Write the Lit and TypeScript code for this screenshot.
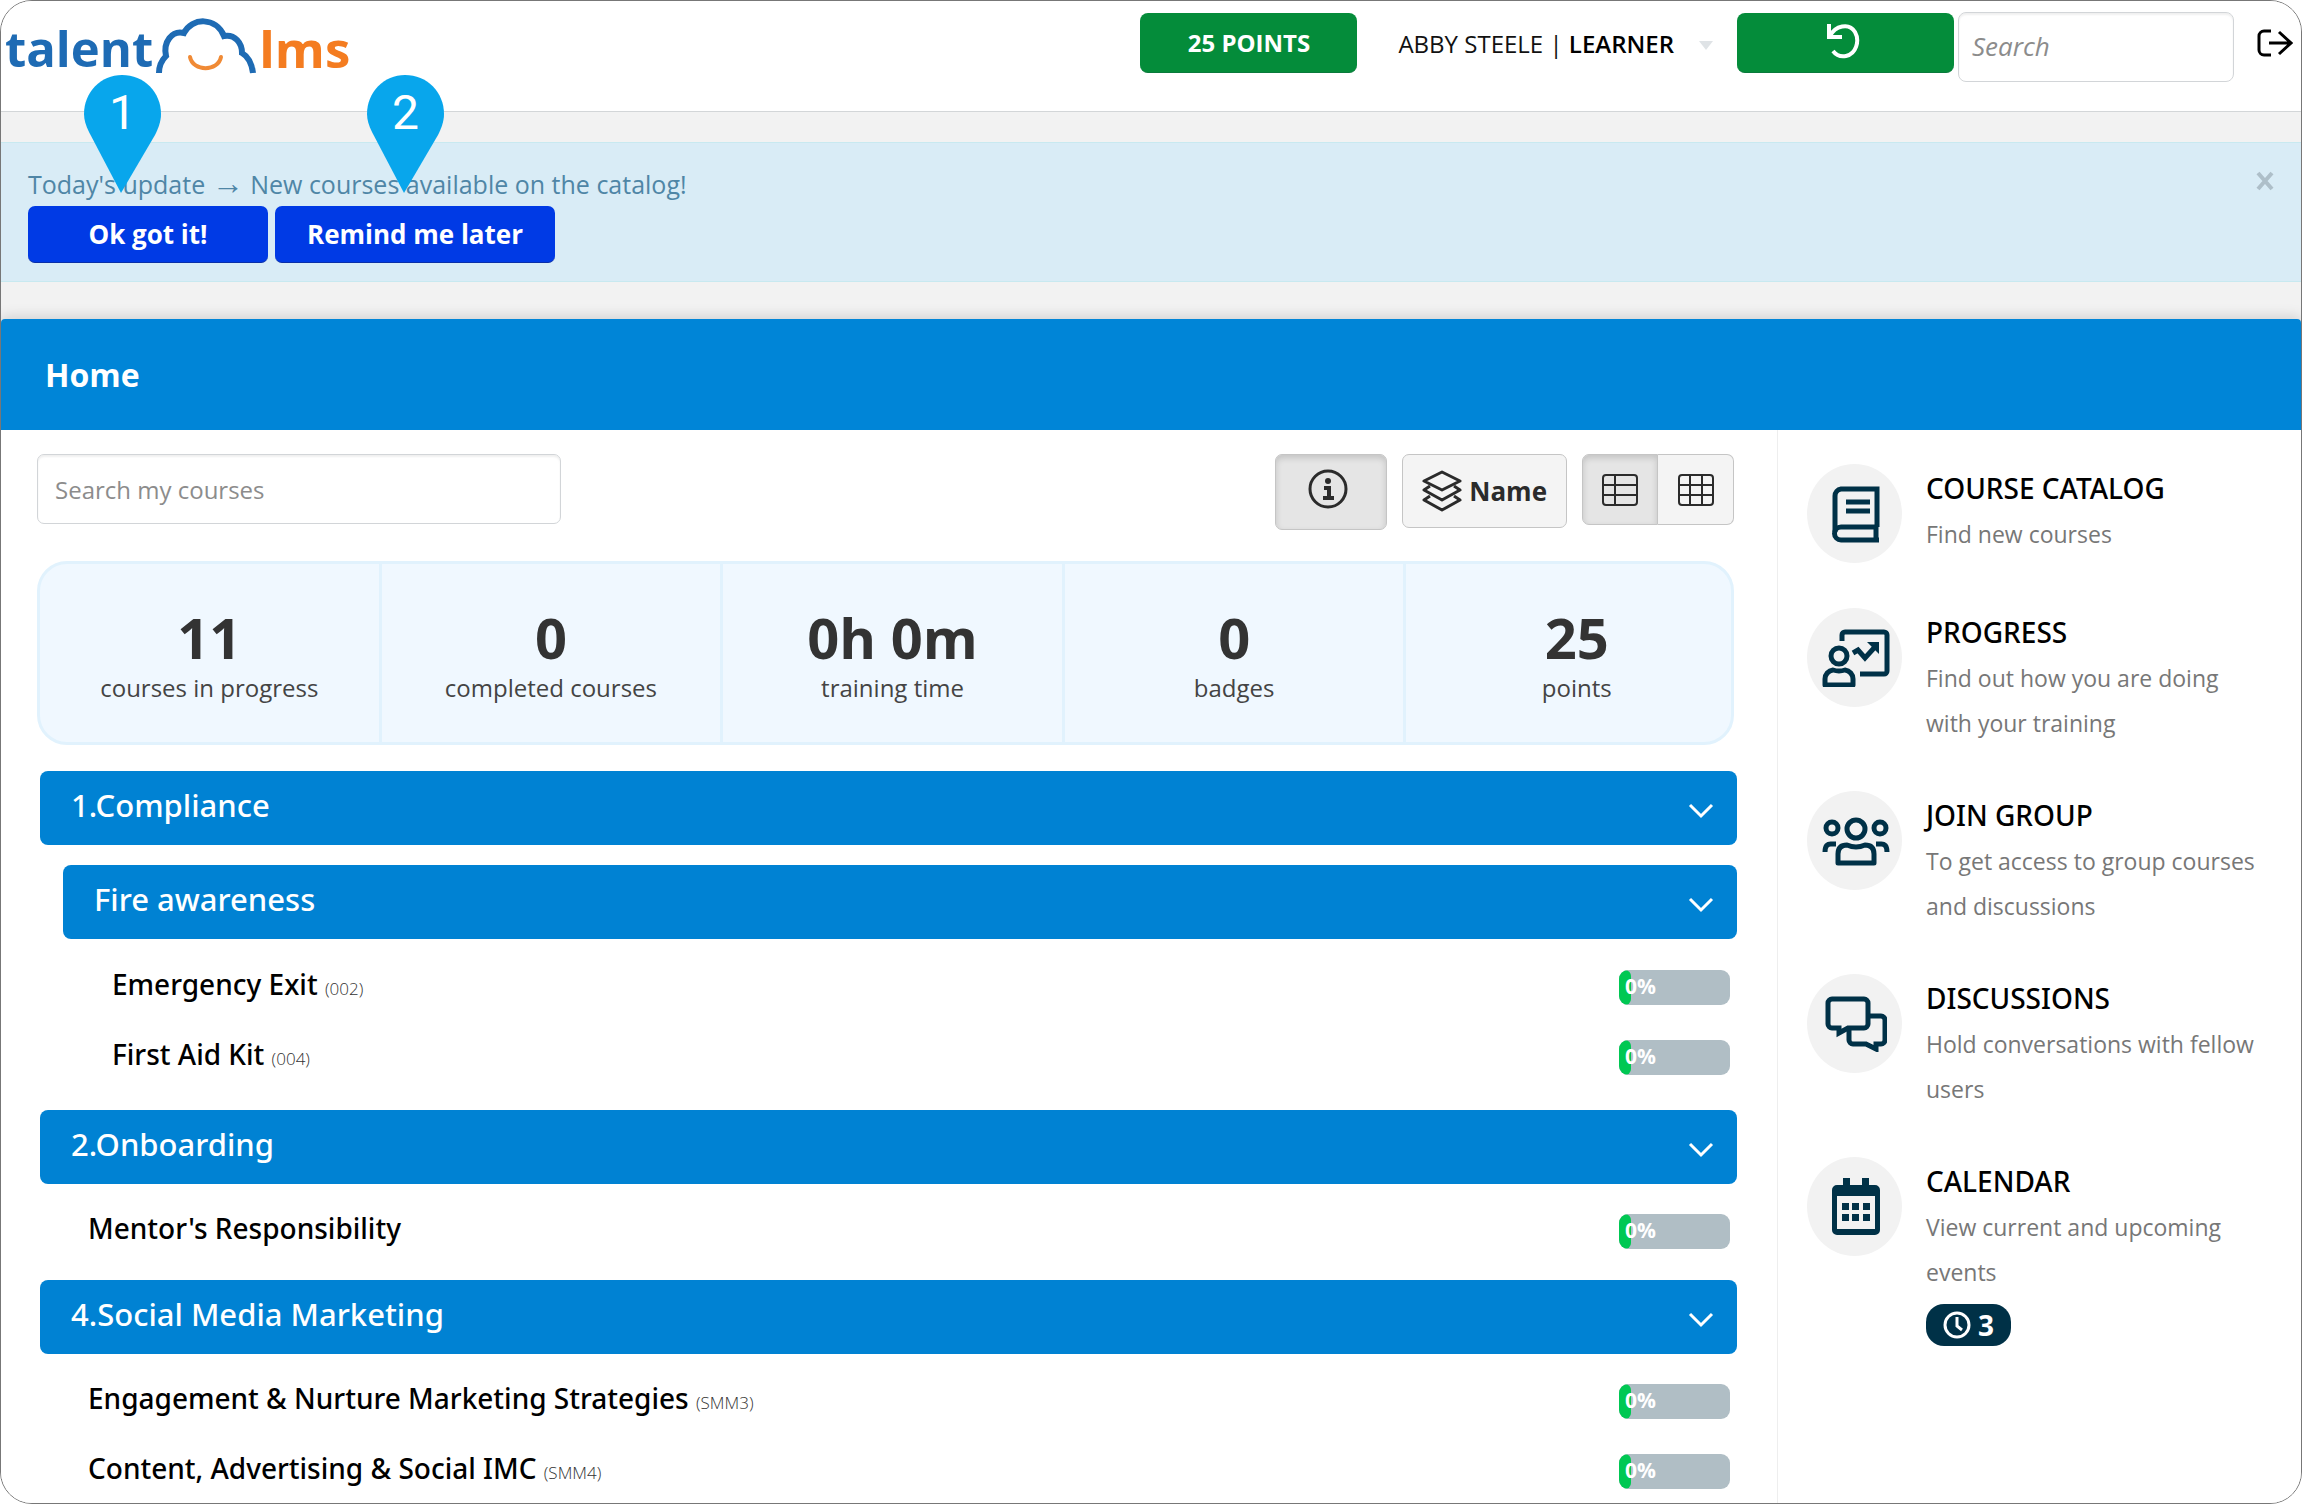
import { LitElement, html, css, nothing, type TemplateResult } from "lit";
import { customElement, property } from "lit/decorators.js";

interface Course {
  title: string;
  code?: string;
  progress: number;
}

interface Category {
  title: string;
  courses: Course[];
  children?: Category[];
}

interface Shortcut {
  title: string;
  text: string;
  icon: TemplateResult;
  events?: number;
}

const categories: Category[] = [
  {
    title: "1.Compliance",
    courses: [],
    children: [
      {
        title: "Fire awareness",
        courses: [
          { title: "Emergency Exit", code: "(002)", progress: 0 },
          { title: "First Aid Kit", code: "(004)", progress: 0 },
        ],
      },
    ],
  },
  {
    title: "2.Onboarding",
    courses: [{ title: "Mentor's Responsibility", progress: 0 }],
  },
  {
    title: "4.Social Media Marketing",
    courses: [
      { title: "Engagement & Nurture Marketing Strategies", code: "(SMM3)", progress: 0 },
      { title: "Content, Advertising & Social IMC", code: "(SMM4)", progress: 0 },
    ],
  },
];

const stats = [
  { value: "11", label: "courses in progress" },
  { value: "0", label: "completed courses" },
  { value: "0h 0m", label: "training time" },
  { value: "0", label: "badges" },
  { value: "25", label: "points" },
];

const bookIcon = html`<svg width="48" height="58" viewBox="0 0 48 58" fill="none" stroke="currentColor" stroke-width="5" aria-hidden="true">
  <path d="M45 42V4H9a7 7 0 0 0-6 7v36" />
  <path d="M46 42H9a6 6 0 0 0 0 13h38M44 42v13" />
  <path d="M14 17h24M14 26h24" />
</svg>`;

const progressIcon = html`<svg width="68" height="58" viewBox="0 0 68 58" fill="none" stroke="currentColor" stroke-width="5" stroke-linejoin="round" aria-hidden="true">
  <path d="M20 12V6a3 3 0 0 1 3-3h39a3 3 0 0 1 3 3v36a3 3 0 0 1-3 3H38" />
  <circle cx="17" cy="27" r="8" />
  <path d="M3 56v-6a9 9 0 0 1 8-9q6 2 12 0a9 9 0 0 1 8 9v6z" />
  <path d="m31 24 5-3 7 8 9-10" stroke-linejoin="miter" />
  <path d="M45 13h12v12z" fill="currentColor" stroke="none" />
</svg>`;

const groupIcon = html`<svg width="68" height="50" viewBox="0 0 68 50" fill="none" stroke="currentColor" stroke-width="5" stroke-linejoin="round" aria-hidden="true">
  <circle cx="34" cy="13" r="9" />
  <circle cx="10" cy="12" r="6" />
  <circle cx="58" cy="12" r="6" />
  <path d="M16 47v-9q0-9 9-9 9 4 18 0 9 0 9 9v9z" />
  <path d="M3 36q0-9 7-8h4M65 36q0-9-7-8h-4" />
</svg>`;

const chatIcon = html`<svg width="62" height="56" viewBox="0 0 62 56" fill="none" stroke="currentColor" stroke-width="5" aria-hidden="true">
  <path d="M7 3h32a4 4 0 0 1 4 4v21a4 4 0 0 1-4 4H23l-9 5v-5H7a4 4 0 0 1-4-4V7a4 4 0 0 1 4-4z" />
  <path d="M45 20h11a4 4 0 0 1 4 4v20a4 4 0 0 1-4 4h-5v5l-10-5H28a4 4 0 0 1-4-4V34" />
</svg>`;

const calendarIcon = html`<svg width="48" height="58" viewBox="0 0 48 58" fill="currentColor" aria-hidden="true">
  <path fill-rule="evenodd" d="M11 0h7v7h12V0h7v7h6a5 5 0 0 1 5 5v40a5 5 0 0 1-5 5H5a5 5 0 0 1-5-5V12a5 5 0 0 1 5-5h6zM5 18v33h38V18z" />
  <path d="M10 25h7v7h-7zM20 25h7v7h-7zM31 25h7v7h-7zM10 36h7v7h-7zM20 36h7v7h-7zM31 36h7v7h-7z" />
</svg>`;

const shortcuts: Shortcut[] = [
  { title: "COURSE CATALOG", text: "Find new courses", icon: bookIcon },
  { title: "PROGRESS", text: "Find out how you are doing with your training", icon: progressIcon },
  { title: "JOIN GROUP", text: "To get access to group courses and discussions", icon: groupIcon },
  { title: "DISCUSSIONS", text: "Hold conversations with fellow users", icon: chatIcon },
  { title: "CALENDAR", text: "View current and upcoming events", icon: calendarIcon, events: 3 },
];

const base = css`
  * {
    box-sizing: border-box;
  }
  h1,
  h2,
  h3,
  p,
  ul,
  dl,
  dd {
    margin: 0;
    padding: 0;
  }
  ul {
    list-style: none;
  }
  button,
  input {
    font: inherit;
    margin: 0;
  }
  button {
    cursor: pointer;
  }
  a {
    color: inherit;
    text-decoration: none;
  }
  svg {
    display: block;
    flex: none;
  }
`;

@customElement("lms-header")
export class LmsHeader extends LitElement {
  static styles = [
    base,
    css`
      :host {
        display: block;
      }
      .bar {
        display: flex;
        align-items: flex-start;
        min-height: 111px;
        padding: 11px 8px 0 4px;
        background: #fff;
        border-bottom: 1px solid #d3d6d8;
      }
      .logo {
        display: flex;
        align-items: flex-start;
        margin-right: auto;
        font-size: 49px;
        font-weight: 700;
        line-height: 72px;
        color: #1e6bb4;
      }
      .cloud {
        margin: 6px 0 0 2px;
      }
      .lms {
        color: #f47c20;
        font-size: 51px;
      }
      .green {
        display: flex;
        align-items: center;
        justify-content: center;
        width: 217px;
        height: 60px;
        margin-top: 1px;
        padding: 0;
        border: 0;
        border-bottom: 1px solid #0a7a3c;
        border-radius: 8px;
        background: #048c3a;
        color: #fff;
        font-size: 24px;
        font-weight: 700;
      }
      .user {
        display: flex;
        align-items: center;
        height: 60px;
        margin: 1px 24px 0 41px;
        padding: 0;
        border: 0;
        background: none;
        color: #111;
        font-size: 24px;
        white-space: pre;
      }
      .role {
        font-weight: 600;
        color: #000;
      }
      .caret {
        margin: 4px 0 0 25px;
      }
      .search {
        width: 276px;
        height: 70px;
        margin-left: 4px;
        padding: 0 13px 2px;
        border: 1px solid #d2d5d8;
        border-radius: 8px;
        box-shadow: inset 0 2px 2px #00000010;
        background: #fff;
      }
      .search::placeholder {
        color: #8c8c8c;
        font-style: italic;
      }
      .logout {
        margin: 16px 0 0 23px;
        color: #000;
      }
    `,
  ];

  render() {
    return html`
      <header class="bar">
        <a class="logo" href="#" aria-label="talentlms">
          <span>talent</span>
          <svg class="cloud" width="104" height="56" viewBox="0 0 104 56" fill="none" stroke-width="6" aria-hidden="true">
            <path stroke="#1e6bb4" d="M4 55C4 47 7 42 11 38 8 24 17 12 29 15 37-1 61-1 69 18 80 16 87 25 87 35 94 39 97 47 98 55" />
            <path stroke="#f08a35" stroke-width="4" stroke-linecap="round" d="M35 39C38 54 63 54 66 39" />
          </svg>
          <span class="lms">lms</span>
        </a>
        <button class="green" type="button">25 POINTS</button>
        <button class="user" type="button"><span>ABBY STEELE | </span><span class="role">LEARNER</span><svg class="caret" width="14" height="9" viewBox="0 0 14 9" aria-hidden="true"><path d="M0 0h14L7 9z" fill="#dfe3e6" /></svg></button>
        <button class="green" type="button" aria-label="Switch back">
          <svg width="40" height="40" viewBox="0 0 40 40" fill="none" stroke="#fff" stroke-width="4" aria-hidden="true">
            <path d="M3 1v13h13" />
            <path d="M4 13C9 3 23-1 29 9c5 9 1 22-9 24-5 1-10-1-13-5" />
          </svg>
        </button>
        <input class="search" type="text" placeholder="Search" aria-label="Search" />
        <a class="logout" href="#" aria-label="Log out">
          <svg width="36" height="30" viewBox="0 0 36 30" fill="none" stroke="currentColor" stroke-width="3" aria-hidden="true">
            <path d="M14 3H7a5 5 0 0 0-5 5v14a5 5 0 0 0 5 5h7" />
            <path d="M12 15h21M22 4l12 11-12 11" />
          </svg>
        </a>
      </header>
    `;
  }
}

@customElement("lms-announcement")
export class LmsAnnouncement extends LitElement {
  static styles = [
    base,
    css`
      :host {
        display: block;
      }
      .alert {
        display: flex;
        align-items: flex-start;
        justify-content: space-between;
        min-height: 140px;
        padding: 23px 26px 16px 27px;
        border: 1px solid #c8e9f0;
        border-width: 1px 0;
        background: #d9ecf6;
      }
      .message {
        margin-bottom: 4px;
        font-size: 25px;
        line-height: 36px;
        color: #4f86a6;
      }
      .arrow {
        font-size: 32px;
        line-height: 24px;
      }
      .actions {
        display: flex;
        gap: 7px;
      }
      .action {
        min-width: 240px;
        height: 57px;
        padding: 0 32px;
        border: 0;
        border-bottom: 1px solid #0a2fa8;
        border-radius: 7px;
        background: #003ae5;
        color: #fff;
        font-weight: 700;
      }
      .close {
        margin-top: 5px;
        padding: 0;
        border: 0;
        background: none;
        color: #aebfc9;
      }
    `,
  ];

  render() {
    return html`
      <div class="alert" role="status">
        <div>
          <p class="message">Today's update <span class="arrow">→</span> New courses available on the catalog!</p>
          <div class="actions">
            <button class="action" type="button">Ok got it!</button>
            <button class="action" type="button">Remind me later</button>
          </div>
        </div>
        <button class="close" type="button" aria-label="Close">
          <svg width="20" height="20" viewBox="0 0 20 20" fill="none" stroke="currentColor" stroke-width="4" aria-hidden="true">
            <path d="m3 2 14 16M17 2 3 18" />
          </svg>
        </button>
      </div>
    `;
  }
}

@customElement("lms-toolbar")
export class LmsToolbar extends LitElement {
  static styles = [
    base,
    css`
      :host {
        display: block;
      }
      .tools {
        display: flex;
        align-items: flex-start;
        gap: 15px;
        min-height: 76px;
      }
      .search {
        flex: 0 1 524px;
        min-width: 0;
        height: 70px;
        margin-right: auto;
        padding: 0 17px;
        border: 1px solid #d2d5d8;
        border-radius: 7px;
        box-shadow: inset 0 2px 2px #00000010;
        background: #fff;
        font-size: 24px;
      }
      .search::placeholder {
        color: #8c8c8c;
      }
      .tool {
        display: flex;
        align-items: center;
        justify-content: center;
        gap: 7px;
        height: 74px;
        padding: 0 19px;
        border: 1px solid #c5c5c5;
        border-radius: 7px;
        background: #f4f4f4;
        color: #2b2b2b;
        font-weight: 700;
      }
      .pressed {
        background: #e5e5e5;
        box-shadow: inset 0 3px 6px #00000026;
      }
      .info {
        width: 112px;
        height: 76px;
        padding: 0 24px 6px 18px;
      }
      .views {
        display: flex;
      }
      .view {
        width: 76px;
        height: 71px;
        padding: 0;
      }
      .view:first-child {
        border-radius: 7px 0 0 7px;
      }
      .view:last-child {
        border-left: 0;
        border-radius: 0 7px 7px 0;
      }
    `,
  ];

  render() {
    return html`
      <div class="tools">
        <input class="search" type="text" placeholder="Search my courses" aria-label="Search my courses" />
        <button class="tool info pressed" type="button" aria-label="Show statistics" aria-pressed="true">
          <svg width="40" height="40" viewBox="0 0 40 40" fill="none" stroke="currentColor" stroke-width="3" aria-hidden="true">
            <circle cx="20" cy="20" r="18" />
            <circle cx="20" cy="12" r="3" fill="currentColor" stroke="none" />
            <path d="M16 19h5v10M15 29h11" stroke-width="4" />
          </svg>
        </button>
        <button class="tool" type="button">
          <svg width="40" height="42" viewBox="0 0 40 42" fill="none" stroke="currentColor" stroke-width="3" stroke-linejoin="round" aria-hidden="true">
            <path d="M20 2 38 11 20 20 2 11z" />
            <path d="M8 16l-6 4 18 10 18-10-6-4M8 26l-6 4 18 10 18-10-6-4" />
          </svg>
          Name
        </button>
        <div class="views" role="group" aria-label="View">
          <button class="tool view pressed" type="button" aria-label="List view" aria-pressed="true">
            <svg width="36" height="32" viewBox="0 0 36 32" fill="none" stroke="currentColor" stroke-width="2" aria-hidden="true">
              <rect x="1" y="1" width="34" height="30" rx="3" />
              <path d="M13 1v30M1 11h34M1 21h34" />
            </svg>
          </button>
          <button class="tool view" type="button" aria-label="Grid view">
            <svg width="36" height="32" viewBox="0 0 36 32" fill="none" stroke="currentColor" stroke-width="2" aria-hidden="true">
              <rect x="1" y="1" width="34" height="30" rx="3" />
              <path d="M12 1v30M24 1v30M1 11h34M1 21h34" />
            </svg>
          </button>
        </div>
      </div>
    `;
  }
}

@customElement("lms-stats")
export class LmsStats extends LitElement {
  static styles = [
    base,
    css`
      :host {
        display: block;
      }
      .stats {
        display: grid;
        grid-template-columns: repeat(4, minmax(0, 100fr)) minmax(0, 95fr);
        border: 3px solid #e1f2fd;
        border-radius: 30px;
        background: #f0f8ff;
        overflow: hidden;
      }
      .stat {
        display: flex;
        flex-direction: column-reverse;
        padding: 41px 0 36px;
        border-right: 3px solid #e1f2fd;
        text-align: center;
      }
      .stat:last-child {
        padding-left: 16px;
        border-right: 0;
      }
      .value {
        font-size: 56px;
        font-weight: 700;
        line-height: 64px;
        color: #333;
      }
      .label {
        font-size: 24px;
        line-height: 37px;
        color: #444;
      }
    `,
  ];

  render() {
    return html`
      <dl class="stats">
        ${stats.map(
          (s) => html`<div class="stat">
            <dt class="label">${s.label}</dt>
            <dd class="value">${s.value}</dd>
          </div>`,
        )}
      </dl>
    `;
  }
}

@customElement("lms-category")
export class LmsCategory extends LitElement {
  @property({ attribute: false }) category!: Category;
  @property({ type: Boolean }) nested = false;

  static styles = [
    base,
    css`
      :host {
        display: block;
      }
      .head {
        display: flex;
        align-items: center;
        justify-content: space-between;
        width: 100%;
        height: 74px;
        padding: 0 23px 0 31px;
        border: 0;
        border-radius: 8px;
        background: #0082d3;
        color: #fff;
        font-family: "Noto Sans", "Open Sans", sans-serif;
        font-size: 31px;
        font-weight: 500;
        text-align: left;
      }
      .name {
        padding-bottom: 6px;
      }
      .chevron {
        margin-top: 6px;
      }
      .children {
        padding: 20px 0 0 23px;
      }
      .courses {
        display: grid;
        gap: 10px;
        padding: 17px 7px 0 48px;
      }
      .nested {
        padding: 18px 7px 4px 49px;
      }
      .course {
        display: flex;
        align-items: center;
        justify-content: space-between;
        height: 60px;
      }
      .title {
        padding-bottom: 7px;
        font-family: "Noto Sans", "Open Sans", sans-serif;
        font-size: 28px;
        font-weight: 500;
        color: #000;
      }
      .code {
        font-family: "Open Sans", sans-serif;
        font-size: 17px;
        font-weight: 300;
        color: #333;
      }
      .progress {
        position: relative;
        width: 111px;
        height: 35px;
        border-radius: 9px;
        background: #b0bec5;
        color: #fff;
        overflow: hidden;
      }
      .fill {
        height: 100%;
        border-radius: 8px;
        background: #00c853;
      }
      .percent {
        position: absolute;
        left: 6px;
        top: 0;
        font-size: 21px;
        font-weight: 700;
        line-height: 33px;
      }
    `,
  ];

  render() {
    const c = this.category;
    return html`
      <h2>
        <button class="head" type="button" aria-expanded="true">
          <span class="name">${c.title}</span>
          <svg class="chevron" width="26" height="16" viewBox="0 0 26 16" fill="none" stroke="#fff" stroke-width="3" aria-hidden="true">
            <path d="m2 2 11 11L24 2" />
          </svg>
        </button>
      </h2>
      ${c.children
        ? html`<div class="children">
            ${c.children.map((child) => html`<lms-category .category=${child} nested></lms-category>`)}
          </div>`
        : nothing}
      ${c.courses.length
        ? html`<ul class="courses ${this.nested ? "nested" : ""}">
            ${c.courses.map(
              (course) => html`<li class="course">
                <a class="title" href="#">${course.title} ${course.code ? html`<span class="code">${course.code}</span>` : nothing}</a>
                <div class="progress" role="progressbar" aria-label=${course.title} aria-valuenow=${course.progress} aria-valuemin="0" aria-valuemax="100">
                  <div class="fill" style="width: ${Math.max(course.progress, 11)}%"></div>
                  <span class="percent">${course.progress}%</span>
                </div>
              </li>`,
            )}
          </ul>`
        : nothing}
    `;
  }
}

@customElement("lms-shortcuts")
export class LmsShortcuts extends LitElement {
  static styles = [
    base,
    css`
      :host {
        display: block;
      }
      .list {
        display: grid;
        gap: 45px;
      }
      .item {
        display: flex;
        align-items: flex-start;
        gap: 24px;
      }
      .disc {
        display: flex;
        flex: none;
        align-items: center;
        justify-content: center;
        width: 95px;
        height: 99px;
        padding-left: 2px;
        border-radius: 50%;
        background: #f2f2f2;
        color: #003147;
      }
      .title {
        font-family: "Noto Sans", "Open Sans", sans-serif;
        font-size: 28px;
        font-weight: 500;
        line-height: 48px;
        color: #000;
      }
      .text {
        font-size: 23px;
        line-height: 45px;
        color: #777;
      }
      .badge {
        display: inline-flex;
        align-items: center;
        gap: 7px;
        height: 42px;
        margin-top: 9px;
        padding: 0 17px;
        border-radius: 18px;
        background: #003147;
        color: #fff;
        font-size: 28px;
        font-weight: 700;
      }
    `,
  ];

  render() {
    return html`
      <ul class="list">
        ${shortcuts.map(
          (s) => html`<li>
            <a class="item" href="#">
              <span class="disc">${s.icon}</span>
              <div>
                <h3 class="title">${s.title}</h3>
                <p class="text">${s.text}</p>
                ${s.events
                  ? html`<span class="badge">
                      <svg width="28" height="28" viewBox="0 0 28 28" fill="none" stroke="currentColor" stroke-width="3" aria-hidden="true">
                        <circle cx="14" cy="14" r="12" />
                        <path d="M14 6v9l5 4" />
                      </svg>
                      ${s.events}
                    </span>`
                  : nothing}
              </div>
            </a>
          </li>`,
        )}
      </ul>
    `;
  }
}

@customElement("app-root")
export class AppRoot extends LitElement {
  static styles = [
    base,
    css`
      :host {
        display: block;
        font-family: "Open Sans", "Noto Sans", sans-serif;
        font-size: 26px;
        background: #fff;
      }
      .frame {
        position: relative;
        display: flex;
        flex-direction: column;
        min-height: 100vh;
        border: 1px solid #777;
        border-radius: 32px;
        background: #f2f2f2;
        overflow: hidden;
      }
      .notice {
        padding: 30px 0 37px;
      }
      .home {
        padding: 0 44px;
        border-radius: 4px 4px 0 0;
        background: #0085d7;
        box-shadow: 0 -2px 14px #00000026;
        color: #fff;
        font-size: 32px;
        font-weight: 700;
        line-height: 111px;
      }
      .content {
        display: grid;
        flex: 1;
        grid-template-columns: minmax(0, 1777fr) minmax(0, 523fr);
        background: #fff;
      }
      .main {
        padding: 24px 43px 0 36px;
        border-right: 1px solid #eee;
      }
      .stats {
        margin-top: 31px;
      }
      .categories {
        display: grid;
        gap: 19px;
        margin: 26px -3px 0 3px;
      }
      .side {
        padding: 34px 38px 0 29px;
      }
      .pin {
        position: absolute;
        top: 74px;
        width: 77px;
        height: 118px;
        color: #fff;
        font-family: Roboto, sans-serif;
        font-size: 48px;
        line-height: 76px;
        text-align: center;
      }
      .pin-shape {
        position: absolute;
        inset: 0;
      }
      .pin-number {
        position: relative;
      }
      .first {
        left: 83px;
      }
      .second {
        left: 366px;
      }
    `,
  ];

  private pin(n: number, place: string) {
    return html`<div class="pin ${place}">
      <svg class="pin-shape" width="77" height="118" viewBox="0 0 77 118" aria-hidden="true">
        <path fill="#08a6ec" d="M38 0C60 0 77 17 77 39c0 8-3 15-6 21L37 118 5 57C2 51 0 45 0 39 0 17 17 0 38 0z" />
      </svg>
      <span class="pin-number">${n}</span>
    </div>`;
  }

  render() {
    return html`
      <div class="frame">
        <lms-header></lms-header>
        <div class="notice"><lms-announcement></lms-announcement></div>
        <h1 class="home">Home</h1>
        <div class="content">
          <main class="main">
            <lms-toolbar></lms-toolbar>
            <lms-stats class="stats"></lms-stats>
            <div class="categories">
              ${categories.map((c) => html`<lms-category .category=${c}></lms-category>`)}
            </div>
          </main>
          <aside class="side"><lms-shortcuts></lms-shortcuts></aside>
        </div>
        ${this.pin(1, "first")} ${this.pin(2, "second")}
      </div>
    `;
  }
}
